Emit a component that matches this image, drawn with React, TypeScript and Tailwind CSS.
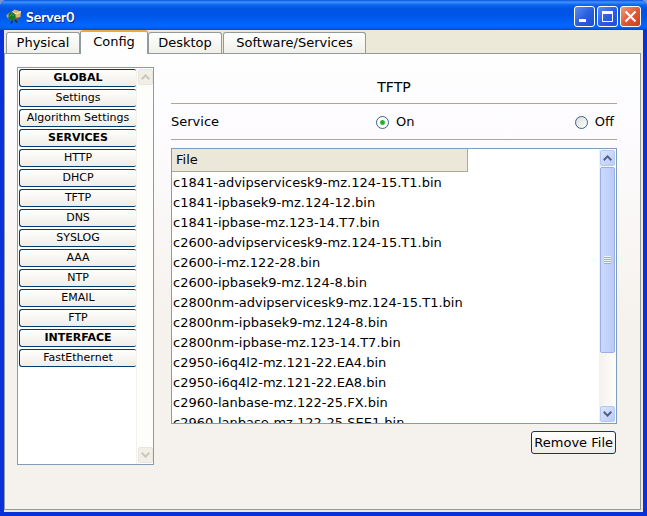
import type { ReactNode } from "react";

const tabs = [
  { label: "Physical", size: "w-[74px]" },
  { label: "Config", size: "w-[68px]", active: true },
  { label: "Desktop", size: "w-[74px]" },
  { label: "Software/Services", size: "w-[143px]" },
];

const menu = [
  { label: "GLOBAL", heading: true },
  { label: "Settings" },
  { label: "Algorithm Settings" },
  { label: "SERVICES", heading: true },
  { label: "HTTP" },
  { label: "DHCP" },
  { label: "TFTP" },
  { label: "DNS" },
  { label: "SYSLOG" },
  { label: "AAA" },
  { label: "NTP" },
  { label: "EMAIL" },
  { label: "FTP" },
  { label: "INTERFACE", heading: true },
  { label: "FastEthernet" },
];

const files = [
  "c1841-advipservicesk9-mz.124-15.T1.bin",
  "c1841-ipbasek9-mz.124-12.bin",
  "c1841-ipbase-mz.123-14.T7.bin",
  "c2600-advipservicesk9-mz.124-15.T1.bin",
  "c2600-i-mz.122-28.bin",
  "c2600-ipbasek9-mz.124-8.bin",
  "c2800nm-advipservicesk9-mz.124-15.T1.bin",
  "c2800nm-ipbasek9-mz.124-8.bin",
  "c2800nm-ipbase-mz.123-14.T7.bin",
  "c2950-i6q4l2-mz.121-22.EA4.bin",
  "c2950-i6q4l2-mz.121-22.EA8.bin",
  "c2960-lanbase-mz.122-25.FX.bin",
  "c2960-lanbase-mz.122-25.SEE1.bin",
];

function AppIcon() {
  return (
    <svg viewBox="0 0 16 16" className="size-4 shrink-0" aria-hidden="true">
      <path d="M5.500 3 8.500.5l6.500 2-.500 5.500-5 1.500-4-3z" fill="#d9b870" />
      <path d="m6 3 4.500 1.800L15 2.500" fill="none" stroke="#fff3c4" />
      <path d="M.5 6 3 3.500l3.500-.500 3 2.500.500 4L6.500 12 2 10z" fill="#54705f" />
      <circle cx="5.800" cy="7.600" r="3.300" fill="#0f7a22" />
      <path d="M3.500 7.500 5.500 5.500l2 1" fill="none" stroke="#4fae52" />
      <path d="M.5 6.500 2.500 4v4L1 9z" fill="#a9a58c" />
      <path d="m6.500 11.500-1.500 3M9 10.500l2 3" fill="none" stroke="#2b2f2a" strokeWidth="1.600" />
      <path d="M9.500 8.500h3v2h-3z" fill="#8a5a20" />
    </svg>
  );
}

function CaptionButton({ label, tone, children }: { label: string; tone: string; children: ReactNode }) {
  return (
    <button aria-label={label} className={`grid size-[21px] place-items-center rounded-[3px] border border-white ${tone}`}>
      <svg viewBox="0 0 19 19" className="size-[19px]" fill="none" stroke="white">
        {children}
      </svg>
    </button>
  );
}

const blueTone = "bg-linear-to-br from-[#5c8cf0] via-[#2a60e0] to-[#1b50d0]";
const redTone = "bg-linear-to-br from-[#f09a80] via-[#df5a34] to-[#c8401c]";

function ScrollArrow({ label, down, disabled }: { label: string; down?: boolean; disabled?: boolean }) {
  return (
    <button
      aria-label={label}
      disabled={disabled}
      className={`grid h-4 w-[15px] shrink-0 place-items-center rounded-[2px] border ${
        disabled ? "border-[#e8e6dc] bg-[#f1efe8] text-[#c9c7ba]" : "border-[#b4c8f6] bg-linear-to-br from-[#dbe5fe] to-[#b9cbf8] text-[#4d6185]"
      }`}
    >
      <svg viewBox="0 0 9 6" className="h-[6px] w-[9px]" fill="none" stroke="currentColor" strokeWidth="2">
        <path d={down ? "M.700.800 4.500 4.600 8.300.800" : "M.700 5.200 4.500 1.400 8.300 5.200"} />
      </svg>
    </button>
  );
}

function ServiceOption({ label, defaultChecked }: { label: string; defaultChecked?: boolean }) {
  return (
    <label className="flex items-center gap-[7px]">
      <input
        type="radio"
        name="service"
        defaultChecked={defaultChecked}
        className="size-[13px] appearance-none rounded-full border border-[#37628f] bg-linear-to-br from-[#dcdcd7] to-white checked:bg-[radial-gradient(circle,#21a121_0,#39b539_2px,#ffffff_3px)]"
      />
      {label}
    </label>
  );
}

export default function App() {
  return (
    <div className="bg-[#7a94d0]">
      <div className="flex h-screen flex-col overflow-hidden rounded-t-[7px] bg-[#0831d9] font-['DejaVu_Sans',Verdana,sans-serif] text-[13px] leading-5 text-black">
        <header className="flex h-[30px] shrink-0 items-center gap-1 bg-[linear-gradient(#0a4fd8_0,#3d95ff_2px,#0a63ee_5px,#0054e3_9px,#0055e8_16px,#0166ff_25px,#0060f5_28px,#0046c8_30px)] pt-[3px] pr-[6px] pl-[6px]">
          <AppIcon />
          <h1 className="flex-1 font-['Lato',sans-serif] text-[14px] font-bold text-white [text-shadow:1px_1px_#0a2a80]">Server0</h1>
          <div className="flex gap-[2px]">
            <CaptionButton label="Minimize" tone={blueTone}>
              <path d="M4 13.500h7" strokeWidth="3" />
            </CaptionButton>
            <CaptionButton label="Maximize" tone={blueTone}>
              <path d="M4.500 5v9.500h10V5" />
              <path d="M4 5.500h11" strokeWidth="3" />
            </CaptionButton>
            <CaptionButton label="Close" tone={redTone}>
              <path d="m4.500 4.500 10 10m0-10-10 10" strokeWidth="2.200" />
            </CaptionButton>
          </div>
        </header>

        <div className="mx-1 mb-1 flex min-h-0 flex-1 flex-col bg-[#ece9d8] pr-[2px] pb-[2px]">
          <nav className="z-10 flex h-[23px] shrink-0 items-end pl-[2px]" role="tablist">
            {tabs.map((tab) => (
              <button
                key={tab.label}
                role="tab"
                aria-selected={!!tab.active}
                className={`${tab.size} shrink-0 rounded-t-[3px] border-x border-[#919b9c] text-center whitespace-nowrap ${
                  tab.active
                    ? "-mb-px h-6 border-t-2 border-t-[#f0a838] bg-[#fefeff] pb-[2px]"
                    : "mr-px h-[21px] border-t bg-linear-to-b from-white to-[#f0f0ea] first:mr-0"
                }`}
              >
                {tab.label}
              </button>
            ))}
          </nav>

          <main className="flex min-h-0 flex-1 gap-[17px] border border-[#919b9c] bg-[linear-gradient(#fefeff_0,#fdfbfd_80px,#f5f2ed_270px)] pt-[13px] pr-[23px] pl-3">
            <aside className="mb-11 flex w-[137px] shrink-0 border border-[#7f9db9] bg-white">
              <div className="flex min-w-0 flex-1 flex-col gap-[2px] py-px pl-px">
                {menu.map((item) => (
                  <button
                    key={item.label}
                    className={`h-[18px] shrink-0 rounded-l-[3px] rounded-r-[2px] border border-r-0 border-[#003c74] bg-linear-to-b from-white to-[#f0ede6] text-[11px] leading-4 whitespace-nowrap ${
                      item.heading ? "font-bold" : ""
                    }`}
                  >
                    {item.label}
                  </button>
                ))}
              </div>
              <div className="flex w-[17px] flex-col items-center justify-between border-l border-[#f3f1ec] bg-[#fdfdfc] py-px">
                <ScrollArrow label="Scroll menu up" disabled />
                <ScrollArrow label="Scroll menu down" down disabled />
              </div>
            </aside>

            <section className="mb-[55px] flex min-w-0 flex-1 flex-col">
              <h2 className="h-[37px] border-b border-[#aca899] pt-[10px] text-center text-[14px]">TFTP</h2>
              <div className="flex h-9 shrink-0 items-center justify-between border-b border-[#aca899] pt-px pr-[3px]">
                <span className="w-[205px]">Service</span>
                <div className="flex flex-1 justify-between">
                  <ServiceOption label="On" defaultChecked />
                  <ServiceOption label="Off" />
                </div>
              </div>

              <div className="mt-2 flex min-h-0 flex-1 border border-[#7f9db9] bg-white">
                <div className="min-w-0 flex-1 overflow-hidden">
                  <table className="w-full border-separate border-spacing-0 text-left">
                    <thead>
                      <tr className="h-[23px]">
                        <th className="w-[296px] border-r border-b border-[#aca899] bg-[#ebe8d9] px-[4px] font-normal">File</th>
                        <th className="border-b border-transparent p-0" />
                      </tr>
                    </thead>
                    <tbody>
                      {files.map((file) => (
                        <tr key={file} className="h-5">
                          <td colSpan={2} className="p-0 pt-px pl-px leading-[19px] whitespace-nowrap">{file}</td>
                        </tr>
                      ))}
                    </tbody>
                  </table>
                </div>
                <div className="flex w-[17px] shrink-0 flex-col items-center bg-linear-to-r from-[#f3f1ec] to-[#fefefb] py-px">
                  <ScrollArrow label="Scroll files up" />
                  <div className="mt-px grid h-[186px] w-[15px] shrink-0 place-items-center rounded-[2px] border border-[#98b0e8] bg-linear-to-r from-[#cbd9fd] to-[#b9cbf8]">
                    <div className="h-[8px] w-[7px] bg-[repeating-linear-gradient(#eef4fe_0_1px,#8cb0f8_1px_2px)]" />
                  </div>
                  <div className="flex-1" />
                  <ScrollArrow label="Scroll files down" down />
                </div>
              </div>

              <button className="mt-[7px] mr-px h-[23px] shrink-0 self-end rounded-[3px] border border-[#003c74] bg-linear-to-b from-white to-[#f0ede6] px-[2px] leading-5 whitespace-nowrap">
                Remove File
              </button>
            </section>
          </main>
        </div>
      </div>
    </div>
  );
}
